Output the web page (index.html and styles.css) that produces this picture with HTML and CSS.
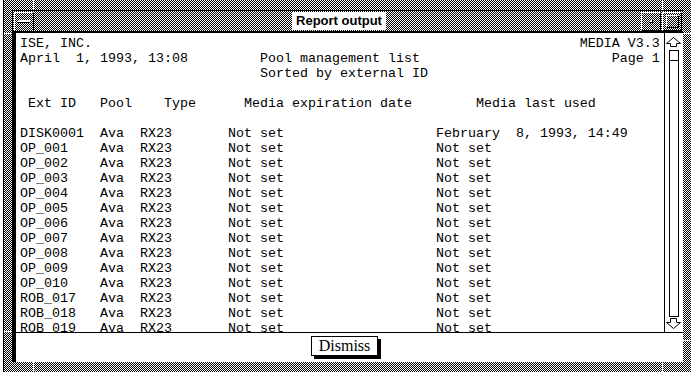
FILE: index.html
```html
<!DOCTYPE html>
<html>
<head>
    <meta charset="utf-8">
    <title>Report output</title>
    <link rel="stylesheet" href="styles.css">
</head>
<body>
    <div class="window">
        <!-- resize corner notches in the frame -->
        <span class="notch v top-l"></span>
        <span class="notch v top-r"></span>
        <span class="notch v bot-l"></span>
        <span class="notch v bot-r"></span>
        <span class="notch h side-tl"></span>
        <span class="notch h side-tr"></span>
        <span class="notch h side-bl"></span>
        <span class="notch h side-br"></span>

        <div class="inner">
            <div class="titlebar">
                <div class="menu-btn"><span class="menu-bar"></span></div>
                <div class="title">Report output</div>
                <div class="win-btn min-btn"><span class="dot"></span></div>
                <div class="win-btn max-btn"><span class="square"></span></div>
            </div>

            <div class="pane">
<pre class="report">ISE, INC.                                                             MEDIA V3.3
April  1, 1993, 13:08         Pool management list                        Page 1
                              Sorted by external ID

 Ext ID   Pool    Type      Media expiration date        Media last used

DISK0001  Ava  RX23       Not set                   February  8, 1993, 14:49
OP_001    Ava  RX23       Not set                   Not set
OP_002    Ava  RX23       Not set                   Not set
OP_003    Ava  RX23       Not set                   Not set
OP_004    Ava  RX23       Not set                   Not set
OP_005    Ava  RX23       Not set                   Not set
OP_006    Ava  RX23       Not set                   Not set
OP_007    Ava  RX23       Not set                   Not set
OP_008    Ava  RX23       Not set                   Not set
OP_009    Ava  RX23       Not set                   Not set
OP_010    Ava  RX23       Not set                   Not set
ROB_017   Ava  RX23       Not set                   Not set
ROB_018   Ava  RX23       Not set                   Not set
ROB_019   Ava  RX23       Not set                   Not set</pre>
                <div class="scrollbar">
                    <svg width="18" height="299" viewBox="0 0 18 299">
                        <path d="M8.5 4.5 L1.5 10.5 H5.5 V13.5 H11.5 V10.5 H15.5 Z" fill="#fff" stroke="#000"/>
                        <rect x="4.5" y="17.5" width="9" height="266" fill="#fff" stroke="#000"/>
                        <line x1="4.5" y1="27.5" x2="13.5" y2="27.5" stroke="#000"/>
                        <path d="M5.5 285.5 H11.5 V289.5 H15.5 L8.5 295.5 L1.5 289.5 H5.5 Z" fill="#fff" stroke="#000"/>
                    </svg>
                </div>
            </div>

            <div class="footer">
                <button class="dismiss">Dismiss</button>
            </div>
        </div>
    </div>
</body>
</html>
```

FILE: styles.css
```css
body {
    margin: 0;
    background: #fff;
    font-family: "Liberation Sans", Arial, sans-serif;
}

.window {
    position: relative;
    box-sizing: border-box;
    width: 688px;
    height: 372px;
    margin-left: 3px;
    padding: 10px 8px 10px 8px;
    border-left: 1px solid #000;
    background: repeating-conic-gradient(#000 0% 25%, #fff 0% 50%) 0 0 / 2px 2px;
}

.notch {
    position: absolute;
    background: #fff;
}

.notch.v {
    width: 1px;
    height: 10px;
}

.notch.h {
    width: 8px;
    height: 1px;
}

.top-l { left: 29px; top: 0; }
.top-r { left: 658px; top: 0; }
.bot-l { left: 29px; bottom: 0; }
.bot-r { left: 658px; bottom: 0; }
.side-tl { left: 0; top: 33px; }
.side-tr { right: 0; top: 33px; }
.side-bl { left: 0; top: 331px; }
.side-br { right: 0; top: 340px; }

.inner {
    display: flex;
    flex-direction: column;
    height: 352px;
    border-left: 1px solid #000;
}

.titlebar {
    display: flex;
    align-items: center;
    height: 20px;
    border-top: 1px solid #000;
    border-bottom: 2px solid #000;
}

.menu-btn {
    box-sizing: border-box;
    display: flex;
    align-items: center;
    justify-content: center;
    width: 20px;
    height: 19px;
    margin-left: 1px;
    border-top: 1px solid #fff;
    border-left: 1px solid #fff;
    border-right: 1px solid #000;
}

.menu-bar {
    width: 12px;
    height: 2px;
    background: #fff;
    border-bottom: 1px solid #000;
}

.title {
    width: 94px;
    height: 18px;
    margin-left: 258px;
    background: #fff;
    color: #000;
    font-size: 13px;
    font-weight: bold;
    line-height: 18px;
    text-align: center;
}

.win-btn {
    box-sizing: border-box;
    display: flex;
    align-items: center;
    justify-content: center;
    width: 20px;
    height: 19px;
    border-top: 1px solid #fff;
    border-left: 1px solid #fff;
    border-right: 1px solid #000;
    border-bottom: 1px solid #000;
}

.min-btn {
    margin-left: auto;
    margin-right: 1px;
}

.max-btn {
    margin-right: 1px;
}

.dot {
    width: 2px;
    height: 2px;
    background: #fff;
    border-right: 1px solid #000;
    border-bottom: 1px solid #000;
}

.square {
    width: 11px;
    height: 11px;
    border-top: 1px solid #fff;
    border-left: 1px solid #fff;
    border-right: 1px solid #000;
    border-bottom: 1px solid #000;
}

.pane {
    display: flex;
    height: 299px;
    border-left: 3px solid #000;
    border-bottom: 1px solid #000;
    background: #fff;
}

.report {
    flex: 1;
    margin: 0;
    padding: 3px 0 0 4px;
    overflow: hidden;
    color: #000;
    font-family: "Liberation Mono", "DejaVu Sans Mono", monospace;
    font-size: 13.33px;
    line-height: 15px;
}

.scrollbar {
    width: 18px;
    border-left: 1px solid #000;
}

.scrollbar svg {
    display: block;
}

.footer {
    display: flex;
    align-items: flex-start;
    height: 29px;
    padding-top: 3px;
    box-sizing: border-box;
    border-left: 3px solid #000;
    background: #fff;
}

.dismiss {
    width: 67px;
    height: 20px;
    margin-left: 295px;
    padding: 0;
    border: 1px solid #000;
    border-radius: 0;
    background: #fff;
    box-shadow: 3px 3px 0 #000;
    color: #000;
    font-family: "Liberation Serif", "Times New Roman", serif;
    font-size: 16px;
    line-height: 18px;
}
```
